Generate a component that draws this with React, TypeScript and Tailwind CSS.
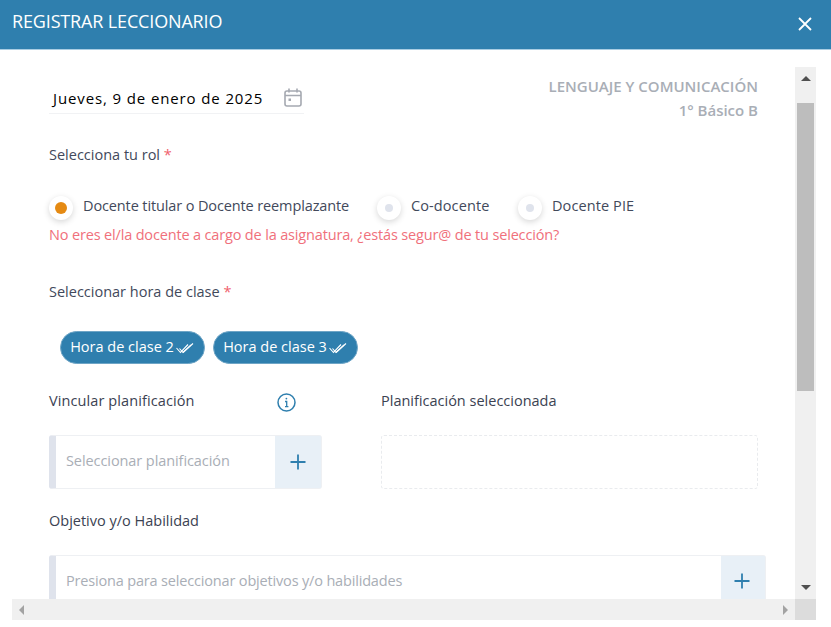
const font = { fontFamily: '"Open Sans", "Noto Sans", sans-serif' };

const DoubleCheck = () => (
  <svg className="w-[18px] h-[12px] ml-[2px] mr-[1px] mt-[2px]" viewBox="0 0 18 12" fill="none" stroke="white" strokeWidth="1.1">
    <path d="M0.5 6l4 4.5L12 2.5" />
    <path d="M3.5 6.5l3.5 4L17 1.5" />
    <path d="M7 10.5L15 3" />
  </svg>
);

const Plus = () => (
  <svg className="w-4 h-4" viewBox="0 0 16 16" stroke="#2f7fae" strokeWidth="1.8" fill="none">
    <path d="M8 0.5v15M0.5 8h15" />
  </svg>
);

const Radio = ({ active, label, className, labelClass }: { active?: boolean; label: string; className: string; labelClass: string }) => (
  <div className={`flex items-center ${className}`}>
    <span className="w-6 h-6 rounded-full bg-white shadow-[0_2px_6px_rgba(0,0,0,0.16)] flex items-center justify-center mt-[1px]">
      <span className={active ? "w-[12px] h-[12px] rounded-full bg-[#e58a13]" : "w-2 h-2 rounded-full bg-[#dfe3ec]"} />
    </span>
    <span className={`ml-[10px] mb-[3px] text-[14.5px] leading-5 text-[#42495b] ${labelClass}`}>{label}</span>
  </div>
);

const Pill = ({ label }: { label: string }) => (
  <div className="w-[145px] h-[33px] rounded-[17px] bg-[#2f7fae] border border-[#6ea5c6] flex items-center justify-center text-white text-[14.5px] pb-[2px]">
    {label}
    <DoubleCheck />
  </div>
);

export default function App() {
  return (
    <div className="w-[831px] h-[627px] bg-white overflow-hidden flex flex-col" style={font}>
      <header className="h-[50px] shrink-0 bg-[#2f7fae] border-b border-[#a9cde3] flex items-center justify-between pl-3 pr-[19px] pb-[6px]">
        <h1 className="text-white text-[18px] tracking-[-0.15px]">REGISTRAR LECCIONARIO</h1>
        <svg className="w-[14px] h-[14px] mt-[5px]" viewBox="0 0 14 14" stroke="white" strokeWidth="1.8" fill="none">
          <path d="M1 1l12 12M13 1L1 13" />
        </svg>
      </header>

      <div className="ml-3 mr-[15px] mt-[17px] h-[553px] grid grid-cols-[783px_21px] grid-rows-[532px_21px]">
        <div className="overflow-hidden pl-[37px] relative">
          <div className="flex justify-between w-[709px] h-[70px]">
            <div className="w-[255px] h-[47px] border-b border-[#f1f2f4] flex items-center justify-between pl-1 pr-[2px] mt-0">
              <span className="text-[15px] font-medium text-black tracking-[0.88px] mt-[16px]">Jueves, 9 de enero de 2025</span>
              <svg className="w-[18px] h-[19px] mt-[14px]" viewBox="0 0 18 19" fill="none" stroke="#a5a9b1" strokeWidth="1.6">
                <rect x="1" y="3" width="16" height="15" rx="2" />
                <path d="M1 7.5h16M5 0.5v4M13 0.5v4" />
                <rect x="4.5" y="10.5" width="2.5" height="2.5" fill="#a5a9b1" stroke="none" />
              </svg>
            </div>
            <div className="text-right text-[#a9aeb6] font-semibold text-[15px] leading-6 mt-[7px]">
              <div>LENGUAJE Y COMUNICACIÓN</div>
              <div>1° Básico B</div>
            </div>
          </div>

          <p className="mt-[8px] text-[14.5px] leading-5 text-[#42495b]">
            Selecciona tu rol <span className="text-[#f0616d]">*</span>
          </p>

          <div className="flex mt-[30px] h-6">
            <Radio active label="Docente titular o Docente reemplazante" className="w-[328px]" labelClass="tracking-[-0.12px]" />
            <Radio label="Co-docente" className="w-[141px]" labelClass="tracking-[0.1px]" />
            <Radio label="Docente PIE" className="w-[140px]" labelClass="tracking-[0.1px]" />
          </div>

          <p className="mt-[6px] text-[14.5px] leading-5 text-[#f0707b] tracking-[-0.16px]">
            No eres el/la docente a cargo de la asignatura, ¿estás segur@ de tu selección?
          </p>

          <p className="mt-[37px] text-[14.5px] leading-5 text-[#42495b]">
            Seleccionar hora de clase <span className="text-[#f0616d]">*</span>
          </p>

          <div className="flex gap-2 ml-[11px] mt-[29px]">
            <Pill label="Hora de clase 2" />
            <Pill label="Hora de clase 3" />
          </div>

          <div className="flex mt-[26px] h-[20px]">
            <div className="w-[332px] flex items-center">
              <span className="w-[228px] text-[14.5px] text-[#3b4252] tracking-[0.1px] mt-[1px]">Vincular planificación</span>
              <svg className="w-[19px] h-[19px] mt-1" viewBox="0 0 19 19" fill="none" stroke="#2f7fae" strokeWidth="1.5">
                <circle cx="9.5" cy="9.5" r="8.5" />
                <path d="M8 8.5h1.7v5M8 13.7h3.4" strokeWidth="1.3" />
                <circle cx="9.4" cy="5.6" r="0.9" fill="#2f7fae" stroke="none" />
              </svg>
            </div>
            <span className="text-[14.5px] text-[#3b4252]">Planificación seleccionada</span>
          </div>

          <div className="flex mt-[25px]">
            <div className="w-[273px] h-[54px] mr-[59px] rounded-[3px] border border-[#eef0f3] border-l-[7px] border-l-[#dfe3ec] flex">
              <span className="flex-1 pl-[10px] pb-[2px] flex items-center text-[14.5px] text-[#a9aeb6] tracking-[-0.08px]">Seleccionar planificación</span>
              <span className="w-[46px] bg-[#e8f0f7] flex items-center justify-center"><Plus /></span>
            </div>
            <div className="w-[377px] h-[54px] rounded-[3px] border border-dashed border-[#e9ebee]" />
          </div>

          <p className="mt-[22px] text-[14.5px] leading-5 text-[#3b4252]">Objetivo y/o Habilidad</p>

          <div className="w-[717px] h-[60px] mt-[24px] rounded-[3px] border border-[#eef0f3] border-l-[7px] border-l-[#dfe3ec] flex">
            <span className="flex-1 pl-[10px] pt-[15px] text-[14.5px] leading-5 text-[#a9aeb6] tracking-[-0.17px]">Presiona para seleccionar objetivos y/o habilidades</span>
            <span className="w-[44px] bg-[#e8f0f7] flex justify-center pt-[17px] pr-[2px]"><Plus /></span>
          </div>
        </div>

        {/* scrollbars are drawn, the screenshot shows them at a fixed place */}
        <div className="bg-[#f0f0f0] flex flex-col items-center">
          <span className="mt-[9px] w-0 h-0 border-x-[5px] border-x-transparent border-b-[5px] border-b-[#505050]" />
          <div className="w-[17px] h-[288px] bg-[#bdbdbd] mt-[22px]" />
          <span className="mt-auto mb-[9px] w-0 h-0 border-x-[5px] border-x-transparent border-t-[5px] border-t-[#505050]" />
        </div>
        <div className="bg-[#f0f0f0] flex items-center justify-between px-[7px]">
          <span className="w-0 h-0 border-y-[5px] border-y-transparent border-r-[5px] border-r-[#a3a3a3]" />
          <span className="w-0 h-0 border-y-[5px] border-y-transparent border-l-[5px] border-l-[#a3a3a3]" />
        </div>
        <div className="bg-[#dcdcdc]" />
      </div>
    </div>
  );
}
